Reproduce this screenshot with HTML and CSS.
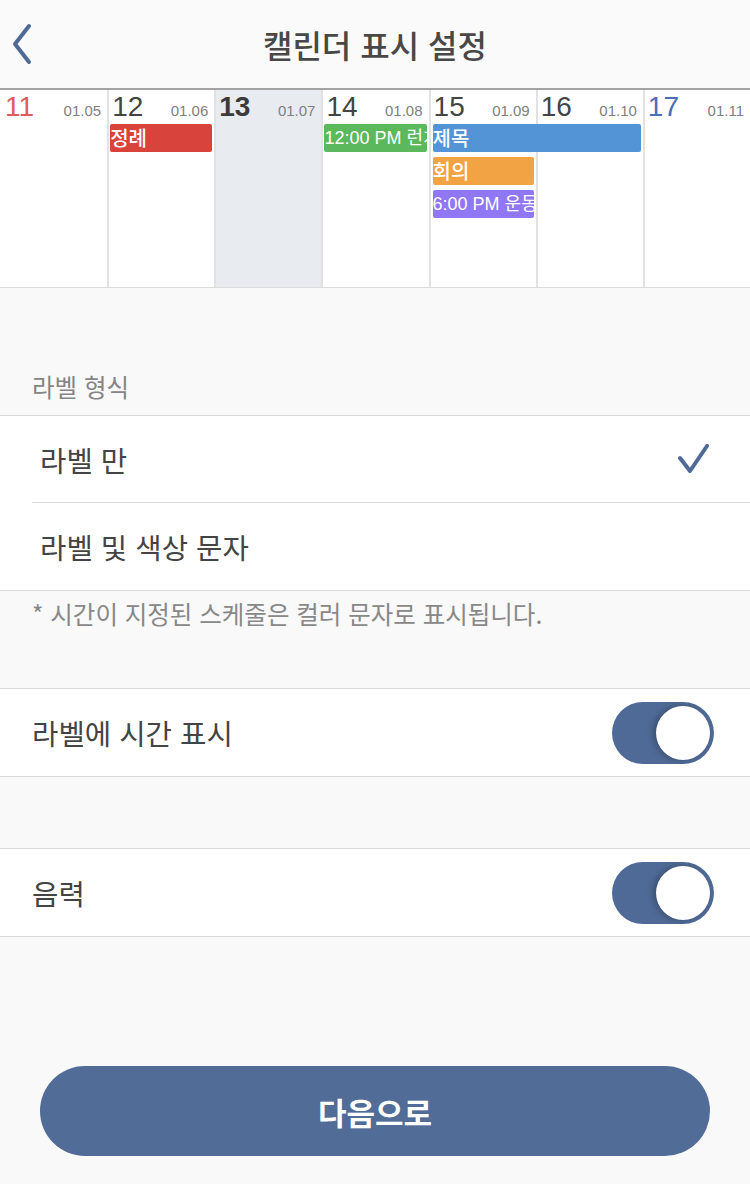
FILE: index.html
```html
<!DOCTYPE html>
<html lang="ko">
<head>
    <meta charset="UTF-8">
    <title>캘린더 표시 설정</title>
    <link rel="stylesheet" href="styles.css">
</head>
<body>
<div class="page">
    <!-- 상단 바 -->
    <div class="topbar">
        <a class="back" href="javascript:void(0)">
            <svg width="30" height="44" viewBox="0 0 30 44">
                <path d="M27 4 L13 22 L27 40" fill="none" stroke="#4f6a96" stroke-width="4" stroke-linecap="round" stroke-linejoin="round"/>
            </svg>
        </a>
        <p class="title">캘린더 표시 설정</p>
    </div>

    <!-- 미리보기 주간 -->
    <div class="week">
        <div class="col c1"></div>
        <div class="col c2"></div>
        <div class="col c3 today"></div>
        <div class="col c4"></div>
        <div class="col c5"></div>
        <div class="col c6"></div>
        <div class="col c7"></div>

        <div class="head c1"><span class="num sun">11</span><span class="date">01.05</span></div>
        <div class="head c2"><span class="num">12</span><span class="date">01.06</span></div>
        <div class="head c3"><span class="num bold">13</span><span class="date">01.07</span></div>
        <div class="head c4"><span class="num">14</span><span class="date">01.08</span></div>
        <div class="head c5"><span class="num">15</span><span class="date">01.09</span></div>
        <div class="head c6"><span class="num">16</span><span class="date">01.10</span></div>
        <div class="head c7"><span class="num sat">17</span><span class="date">01.11</span></div>

        <div class="ev red c2 r2">정례</div>
        <div class="ev green c4 r2 small">12:00 PM 런치</div>
        <div class="ev blue span56 r2">제목</div>
        <div class="ev orange c5 r3">회의</div>
        <div class="ev purple c5 r4 small">6:00 PM 운동</div>
    </div>

    <!-- 라벨 형식 -->
    <div class="section-head">라벨 형식</div>
    <div class="list">
        <div class="row option line">
            <span>라벨 만</span>
            <svg width="34" height="30" viewBox="0 0 34 30">
                <path d="M4 14 L14 27 L31 2" fill="none" stroke="#4f6a96" stroke-width="4" stroke-linecap="round" stroke-linejoin="round"/>
            </svg>
        </div>
        <div class="row option">
            <span>라벨 및 색상 문자</span>
        </div>
    </div>
    <p class="note">* 시간이 지정된 스케줄은 컬러 문자로 표시됩니다.</p>

    <div class="list">
        <div class="row">
            <span>라벨에 시간 표시</span>
            <div class="toggle"><div class="knob"></div></div>
        </div>
    </div>

    <div class="list gap">
        <div class="row">
            <span>음력</span>
            <div class="toggle"><div class="knob"></div></div>
        </div>
    </div>

    <a class="next" href="javascript:void(0)">다음으로</a>
</div>
</body>
</html>
```

FILE: styles.css
```css
*{
    padding: 0px;
    margin: 0px;
    box-sizing: border-box;
}
body{
    width: 750px;
    background: #f9f9f9;
    font-family: "Noto Sans CJK KR", sans-serif;
    color: #444;
}
.page{
    display: flex;
    flex-direction: column;
}
.topbar{
    height: 88px;
    background: #fafafa;
    display: flex;
    align-items: center;
    justify-content: center;
    position: relative;
}
.back{
    position: absolute;
    left: 2px;
    top: 22px;
    display: flex;
}
.title{
    font-size: 32px;
    font-weight: 500;
    color: #484848;
}

/* 주간 미리보기 */
.week{
    height: 200px;
    background: white;
    border-top: 2px solid #a3a3a3;
    border-bottom: 1px solid #dcdcdc;
    display: grid;
    grid-template-columns: repeat(7, 1fr);
    grid-template-rows: 33px 33px 33px 33px 1fr;
}
.col{
    grid-row: 1 / -1;
    border-left: 2px solid #e2e2e2;
}
.col.c1{
    border-left: none;
}
.today{
    background: #e8ebf0;
}
.c1{ grid-column: 1; }
.c2{ grid-column: 2; }
.c3{ grid-column: 3; }
.c4{ grid-column: 4; }
.c5{ grid-column: 5; }
.c6{ grid-column: 6; }
.c7{ grid-column: 7; }
.span56{ grid-column: 5 / 7; }
.r2{ grid-row: 2; }
.r3{ grid-row: 3; }
.r4{ grid-row: 4; }
.head{
    grid-row: 1;
    display: flex;
    justify-content: space-between;
    align-items: baseline;
    padding: 0 6px 0 5px;
    font-family: "Liberation Sans", sans-serif;
}
.head.c1{
    padding-left: 5px;
}
.num{
    font-size: 28px;
    line-height: 34px;
    color: #444;
}
.num.bold{
    font-weight: bold;
    color: #3a3a3a;
}
.num.sun{
    color: #e05a5e;
}
.num.sat{
    color: #4a6db8;
}
.date{
    font-size: 15px;
    color: #808080;
}
.ev{
    height: 28px;
    margin: 1px 2px 4px 3px;
    border-radius: 2px;
    color: white;
    font-size: 20px;
    font-weight: 500;
    line-height: 28px;
    white-space: nowrap;
    overflow: hidden;
    align-self: start;
}
.ev.c5, .ev.span56{
    margin-left: 4px;
}
.ev.small{
    font-family: "Liberation Sans", "Noto Sans CJK KR", sans-serif;
    font-size: 18px;
    font-weight: normal;
}
.red{ background: #d8443b; }
.green{ background: #5cb85c; }
.blue{ background: #5294d6; }
.orange{ background: #f2a343; }
.purple{ background: #9077f5; }

/* 설정 목록 */
.section-head{
    height: 127px;
    display: flex;
    align-items: flex-end;
    padding: 0 32px 11px;
    font-size: 24.5px;
    color: #858585;
}
.list{
    background: white;
    border-top: 1px solid #dadada;
    border-bottom: 1px solid #dadada;
}
.list.gap{
    margin-top: 71px;
}
.row{
    height: 87px;
    display: flex;
    align-items: center;
    justify-content: space-between;
    padding: 0 36px 0 32px;
    font-size: 28.7px;
}
.row.option{
    padding: 0 40px 0 40px;
}
.row.line{
    border-bottom: 1px solid #dadada;
    margin-left: 32px;
    padding-left: 8px;
}
.note{
    height: 97px;
    padding: 5px 32px 0;
    font-size: 24.5px;
    color: #888;
}
.toggle{
    width: 102px;
    height: 62px;
    border-radius: 31px;
    background: #4f6a96;
    display: flex;
    justify-content: flex-end;
    align-items: center;
    padding: 0 4px;
}
.knob{
    width: 54px;
    height: 54px;
    border-radius: 50%;
    background: white;
    box-shadow: -3px 0 6px rgba(0, 0, 0, 0.25);
}
.next{
    margin: 129px 40px 0;
    height: 90px;
    border-radius: 45px;
    background: #516c97;
    color: white;
    font-size: 31px;
    font-weight: bold;
    text-decoration: none;
    display: flex;
    align-items: center;
    justify-content: center;
}
```
